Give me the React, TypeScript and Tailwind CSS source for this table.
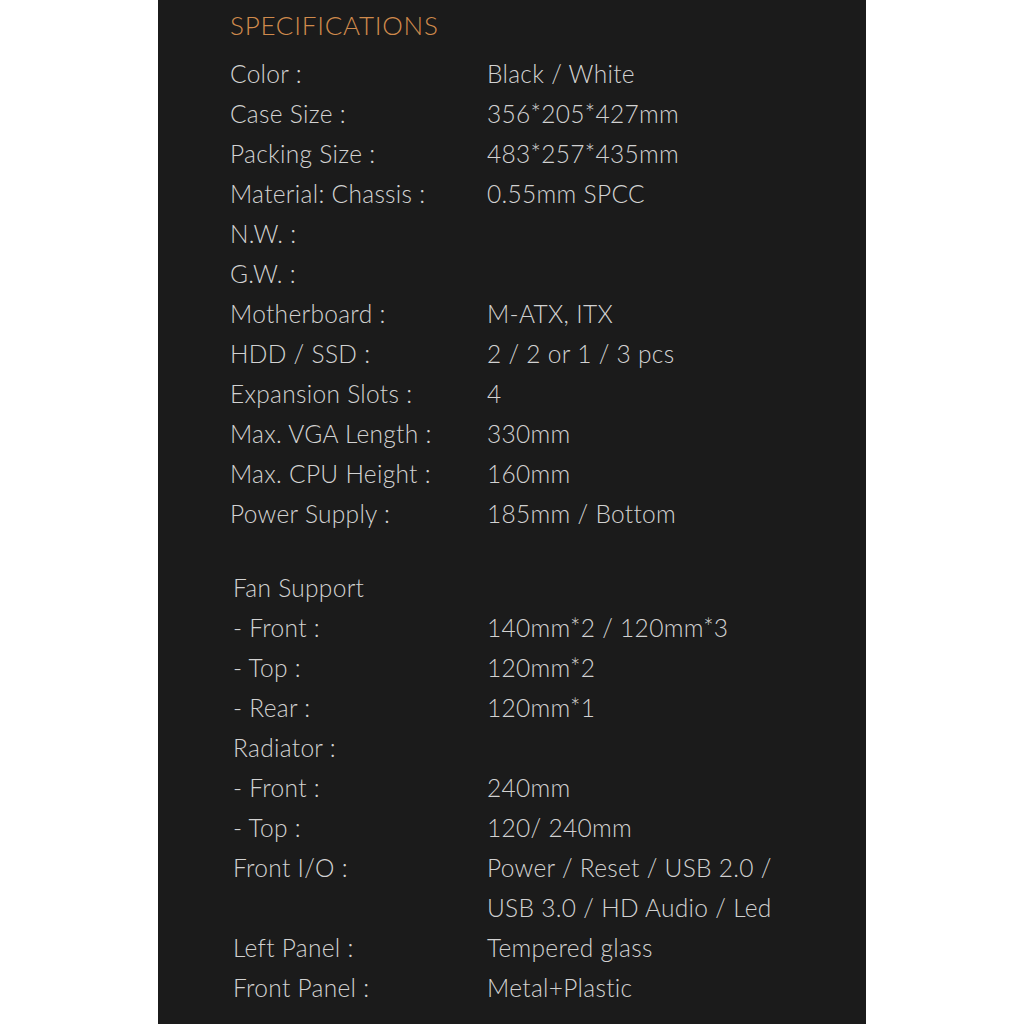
import React from 'react';

type Spec = { label: string; value?: string[] };

const mainSpecs: Spec[] = [
  { label: 'Color :', value: ['Black / White'] },
  { label: 'Case Size :', value: ['356*205*427mm'] },
  { label: 'Packing Size :', value: ['483*257*435mm'] },
  { label: 'Material: Chassis :', value: ['0.55mm SPCC'] },
  { label: 'N.W. :' },
  { label: 'G.W. :' },
  { label: 'Motherboard :', value: ['M-ATX, ITX'] },
  { label: 'HDD / SSD :', value: ['2 / 2 or 1 / 3 pcs'] },
  { label: 'Expansion Slots :', value: ['4'] },
  { label: 'Max. VGA Length :', value: ['330mm'] },
  { label: 'Max. CPU Height :', value: ['160mm'] },
  { label: 'Power Supply :', value: ['185mm / Bottom'] },
];

const coolingSpecs: Spec[] = [
  { label: 'Fan Support' },
  { label: '- Front :', value: ['140mm*2 / 120mm*3'] },
  { label: '- Top :', value: ['120mm*2'] },
  { label: '- Rear :', value: ['120mm*1'] },
  { label: 'Radiator :' },
  { label: '- Front :', value: ['240mm'] },
  { label: '- Top :', value: ['120/ 240mm'] },
  { label: 'Front I/O :', value: ['Power / Reset / USB 2.0 /', 'USB 3.0 / HD Audio / Led'] },
  { label: 'Left Panel :', value: ['Tempered glass'] },
  { label: 'Front Panel :', value: ['Metal+Plastic'] },
];

const SpecRow: React.FC<{ spec: Spec; indent?: boolean }> = ({ spec, indent }) => (
  <div className="grid grid-cols-[257px_1fr]">
    <div className={indent ? 'pl-[3px]' : ''}>{spec.label}</div>
    <div>
      {spec.value?.map((line) => (
        <div key={line}>{line}</div>
      ))}
    </div>
  </div>
);

export default function App() {
  return (
    <div className="w-full min-h-screen bg-white">
      <div
        className="mx-auto w-[708px] h-[1024px] bg-[#1b1b1b] pl-[72px] pt-[5px] text-[#d2d2d2] text-[24.5px] leading-[40px] font-light tracking-[0.3px]"
        style={{ fontFamily: 'Lato, "Noto Sans", sans-serif' }}
      >
        <h2 className="text-[26px] leading-[40px] font-light text-[#d08a4c] mb-[9px] tracking-[0.75px]">
          SPECIFICATIONS
        </h2>
        <div className="flex flex-col">
          {mainSpecs.map((s) => (
            <SpecRow key={s.label} spec={s} />
          ))}
        </div>
        <div className="flex flex-col mt-[34px]">
          {coolingSpecs.map((s, i) => (
            <SpecRow key={i} spec={s} indent />
          ))}
        </div>
      </div>
    </div>
  );
}
